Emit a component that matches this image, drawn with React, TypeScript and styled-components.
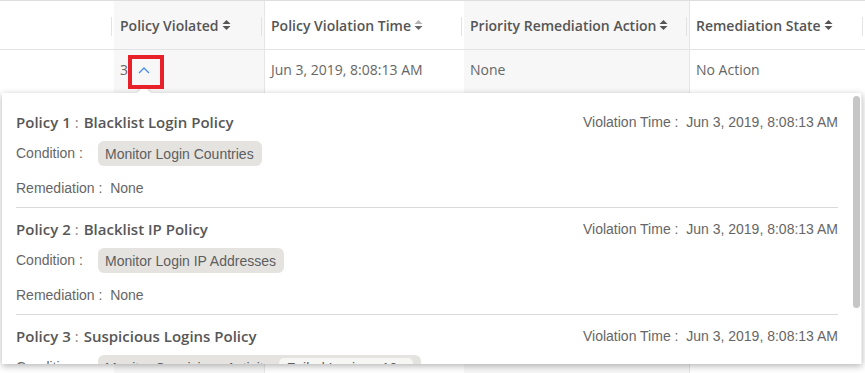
import React from 'react';
import styled, { createGlobalStyle } from 'styled-components';

const GlobalStyle = createGlobalStyle`
  html, body {
    margin: 0;
    padding: 0;
    background: #ffffff;
  }
  body {
    font-family: "Open Sans", "Liberation Sans", Arial, sans-serif;
  }
`;

const Page = styled.div`
  position: relative;
  width: 865px;
  height: 373px;
  overflow: hidden;
  display: flex;
  flex-direction: column;
  border-top: 1px solid #dedede;
  box-sizing: border-box;
`;

const Row = styled.div<{ $fill?: boolean }>`
  display: grid;
  grid-template-columns: 114px 150px 200px 225px 1fr;
  ${(p) => (p.$fill ? 'flex: 1;' : '')}
`;

const HeadCell = styled.div<{ $shaded?: boolean; $ruled?: boolean }>`
  position: relative;
  height: 48px;
  display: flex;
  align-items: center;
  padding-left: 6px;
  background: ${(p) => (p.$shaded ? '#f7f7f7' : '#ffffff')};
  border-left: ${(p) => (p.$ruled ? '1px solid #e6e6e6' : 'none')};
  border-bottom: 1px solid #e3e3e3;
  color: #555555;
  font-size: 14px;
  font-weight: 600;
  gap: 3px;

  &::after {
    content: '';
    position: absolute;
    right: 2px;
    top: 16px;
    height: 19px;
    width: 1px;
    background: #e3e3e3;
  }
`;

const BodyCell = styled.div<{ $shaded?: boolean; $ruled?: boolean }>`
  padding: 10px 0 0 6px;
  background: ${(p) => (p.$shaded ? '#f7f7f7' : '#ffffff')};
  border-left: ${(p) => (p.$ruled ? '1px solid #e6e6e6' : 'none')};
  color: #666666;
  font-size: 14px;
  line-height: 20px;
`;

const ExpandIcon = styled.span`
  display: inline-flex;
  vertical-align: middle;
  margin-left: 10px;
  margin-top: -3px;
`;

const Highlight = styled.div`
  position: absolute;
  left: 128px;
  top: 54px;
  width: 36px;
  height: 34px;
  box-sizing: border-box;
  border: 4px solid #e8202a;
  z-index: 5;
`;

const Popover = styled.div`
  position: absolute;
  left: 2px;
  top: 92px;
  width: 860px;
  height: 271px;
  background: #ffffff;
  box-shadow: 0 2px 7px rgba(0, 0, 0, 0.3);
  z-index: 3;
`;

const Arrow = styled.div`
  position: absolute;
  left: 137px;
  top: -5px;
  width: 10px;
  height: 10px;
  background: #ffffff;
  transform: rotate(45deg);
  box-shadow: -1px -1px 2px rgba(0, 0, 0, 0.12);
  z-index: 4;
`;

const Body = styled.div`
  position: relative;
  height: 100%;
  overflow: hidden;
  padding: 8px 24px 0 14px;
  box-sizing: border-box;
  background: #ffffff;
  z-index: 3;
`;

const ScrollThumb = styled.div`
  position: absolute;
  right: 2px;
  top: 3px;
  width: 7px;
  height: 212px;
  border-radius: 4px;
  background: #c6c6c6;
  z-index: 4;
`;

const ScrollTrack = styled.div`
  position: absolute;
  right: 0;
  top: 0;
  bottom: 0;
  width: 1px;
  background: #ececec;
  z-index: 4;
`;

const Item = styled.div<{ $last?: boolean }>`
  padding: 10px 0 9px;
  border-bottom: ${(p) => (p.$last ? 'none' : '1px solid #d9d9d9')};
`;

const TitleLine = styled.div`
  display: flex;
  justify-content: space-between;
  align-items: center;
  height: 22px;
`;

const Title = styled.div`
  font-family: "Open Sans", "Liberation Sans", sans-serif;
  font-size: 15px;
  font-weight: 600;
  color: #575757;
`;

const Sep = styled.span`
  font-weight: 400;
  color: #888888;
  margin: 0 5px 0 4px;
`;

const Meta = styled.div`
  font-family: "Liberation Sans", Arial, sans-serif;
  font-size: 14px;
  color: #666666;
`;

const Field = styled.div<{ $gap: number }>`
  display: flex;
  align-items: center;
  margin-top: ${(p) => p.$gap}px;
  font-family: "Liberation Sans", Arial, sans-serif;
  font-size: 14px;
  color: #666666;
  line-height: 20px;
`;

const Label = styled.span`
  width: 82px;
  flex: none;
  margin-top: -2px;
`;

const Chip = styled.span`
  display: inline-flex;
  align-items: center;
  gap: 8px;
  height: 25px;
  padding: 0 8px 0 7px;
  border-radius: 6px;
  background: #e4e3e0;
  color: #5e5e5e;
  font-size: 14px;
  white-space: nowrap;
`;

const InnerChip = styled.span`
  display: inline-flex;
  align-items: center;
  height: 19px;
  padding: 0 8px;
  border-radius: 5px;
  background: #f6f6f5;
`;

function SortIcon({ upColor = '#555', downColor = '#555' }: { upColor?: string; downColor?: string }) {
  return (
    <svg width="9" height="12" viewBox="0 0 9 12">
      <polygon points="0.5,5 4.5,1 8.5,5" fill={upColor} />
      <polygon points="0.5,7 4.5,11 8.5,7" fill={downColor} />
    </svg>
  );
}

function ChevronUp() {
  return (
    <svg width="12" height="8" viewBox="0 0 12 8">
      <polyline points="1,7 6,2 11,7" fill="none" stroke="#4a8fe0" strokeWidth="1.4" />
    </svg>
  );
}

const policies = [
  { n: 1, name: 'Blacklist Login Policy', condition: 'Monitor Login Countries' },
  { n: 2, name: 'Blacklist IP Policy', condition: 'Monitor Login IP Addresses' },
  { n: 3, name: 'Suspicious Logins Policy', condition: 'Monitor Suspicious Activity', extra: 'Failed Logins : 10+' },
];

export default function App() {
  return (
    <>
      <GlobalStyle />
      <Page>
        <Row>
          <HeadCell />
          <HeadCell $shaded>
            Policy Violated <SortIcon />
          </HeadCell>
          <HeadCell $ruled>
            Policy Violation Time <SortIcon upColor="#b5b5b5" downColor="#666" />
          </HeadCell>
          <HeadCell $shaded>
            Priority Remediation Action <SortIcon />
          </HeadCell>
          <HeadCell $ruled>
            Remediation State <SortIcon />
          </HeadCell>
        </Row>
        <Row $fill>
          <BodyCell />
          <BodyCell $shaded>
            3
            <ExpandIcon>
              <ChevronUp />
            </ExpandIcon>
          </BodyCell>
          <BodyCell $ruled>Jun 3, 2019, 8:08:13 AM</BodyCell>
          <BodyCell $shaded>None</BodyCell>
          <BodyCell $ruled>No Action</BodyCell>
        </Row>

        <Highlight />

        <Popover>
          <Arrow />
          <Body>
            {policies.map((p, i) => (
              <Item key={p.n} $last={i === policies.length - 1}>
                <TitleLine>
                  <Title>
                    Policy {p.n}
                    <Sep>:</Sep>
                    {p.name}
                  </Title>
                  <Meta>Violation Time :&nbsp; Jun 3, 2019, 8:08:13 AM</Meta>
                </TitleLine>
                <Field $gap={8}>
                  <Label>Condition :</Label>
                  <Chip>
                    {p.condition}
                    {p.extra && <InnerChip>{p.extra}</InnerChip>}
                  </Chip>
                </Field>
                <Field $gap={12}>Remediation :&nbsp; None</Field>
              </Item>
            ))}
            <ScrollThumb />
            <ScrollTrack />
          </Body>
        </Popover>
      </Page>
    </>
  );
}
